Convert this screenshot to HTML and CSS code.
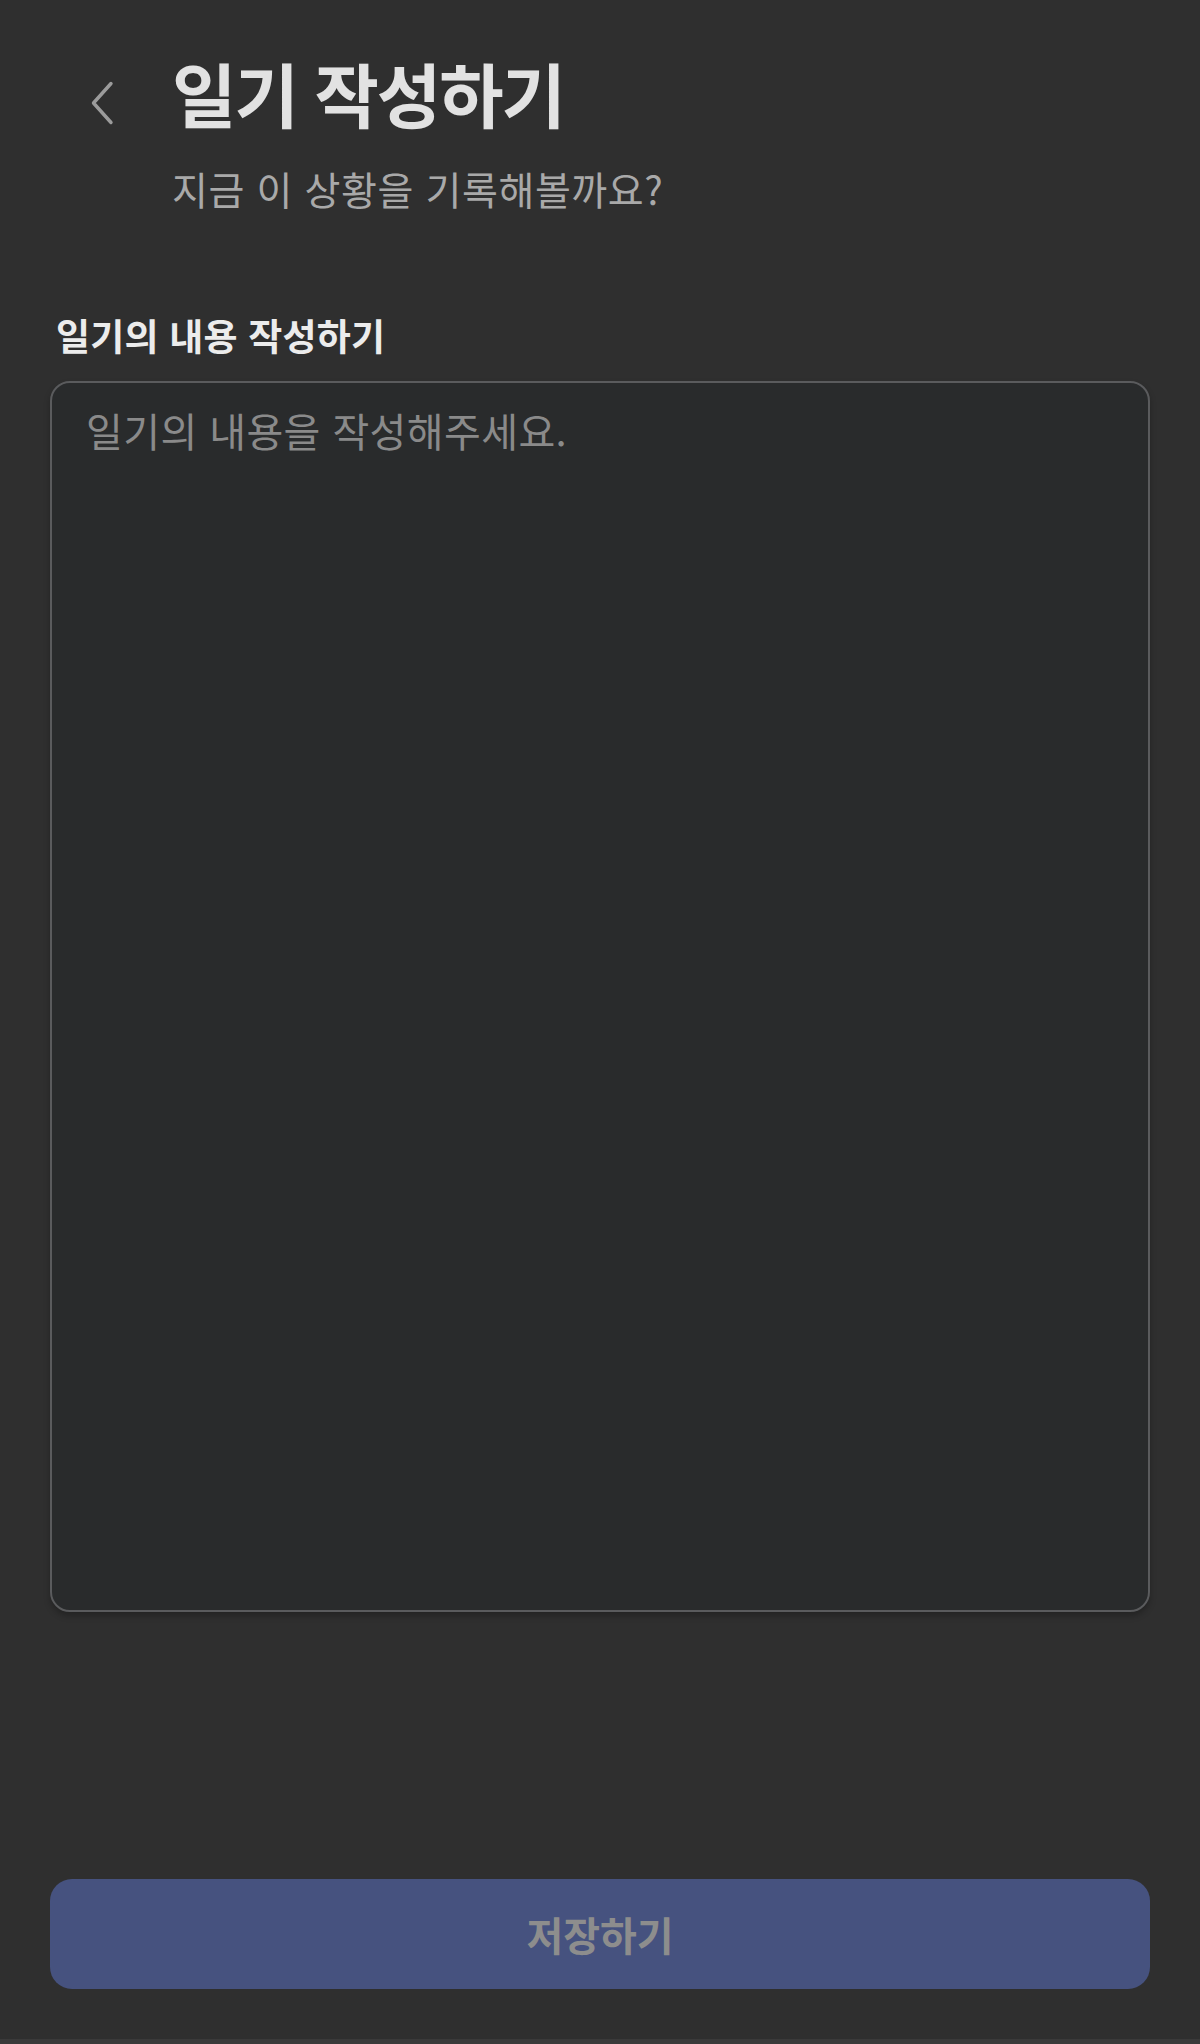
FILE: index.html
```html
<!DOCTYPE html>
<html lang="ko">
<head>
<meta charset="utf-8">
<title>일기 작성하기</title>
<link rel="stylesheet" href="styles.css">
</head>
<body>
<div class="page">
  <header class="header">
    <div class="title-row">
      <button class="back" aria-label="뒤로">
        <svg width="24" height="44" viewBox="0 0 24 44" fill="none">
          <path d="M21 2.5 L3.5 22 L21 41.5" stroke="#9b9b9b" stroke-width="3.4" stroke-linecap="round" stroke-linejoin="round"/>
        </svg>
      </button>
      <h1 class="title">일기 작성하기</h1>
    </div>
    <p class="subtitle">지금 이 상황을 기록해볼까요?</p>
  </header>
  <main class="content">
    <label class="label" for="diary">일기의 내용 작성하기</label>
    <textarea id="diary" class="editor" placeholder="일기의 내용을 작성해주세요."></textarea>
  </main>
  <div class="actions">
    <button class="save">저장하기</button>
  </div>
  <div class="bottom-bar"></div>
</div>
</body>
</html>
```

FILE: styles.css
```css
* { box-sizing: border-box; }
html, body {
  margin: 0;
  padding: 0;
  background: #2f2f2f;
}
body {
  font-family: "Noto Sans CJK KR", "Noto Sans", sans-serif;
  color: #e4e4e4;
}
.page {
  height: 2044px;
  display: flex;
  flex-direction: column;
}
.header {
  padding: 43px 0 0 0;
}
.title-row {
  display: flex;
  align-items: center;
  padding-left: 90px;
  gap: 58px;
}
.back {
  background: none;
  border: 0;
  padding: 0;
  width: 24px;
  height: 44px;
  display: flex;
  margin-top: 20px;
}
.title {
  margin: 0;
  font-size: 70px;
  line-height: 100px;
  font-weight: 700;
  letter-spacing: -2px;
  color: #e2e2e2;
}
.subtitle {
  margin: 20px 0 0 172px;
  font-size: 39px;
  line-height: 50px;
  font-weight: 400;
  letter-spacing: 0.6px;
  color: #a9a9a9;
}
.content {
  padding: 0 50px;
  display: flex;
  flex-direction: column;
  margin-top: 97px;
}
.label {
  padding-left: 6px;
  font-size: 37px;
  line-height: 50px;
  font-weight: 700;
  letter-spacing: 0.2px;
  color: #ececec;
}
.editor {
  margin-top: 21px;
  height: 1231px;
  width: 100%;
  resize: none;
  background: #292b2c;
  border: 2px solid #5a5b5d;
  border-radius: 20px;
  box-shadow: 0 4px 6px rgba(0,0,0,0.25);
  padding: 20px 34px;
  font-family: "Noto Sans CJK KR", "Noto Sans", sans-serif;
  font-size: 40px;
  line-height: 54px;
  letter-spacing: 0.4px;
  color: #cfcfcf;
  outline: none;
}
.editor::placeholder {
  color: #8a8a8a;
}
.actions {
  margin-top: auto;
  padding: 0 50px;
}
.save {
  width: 100%;
  height: 110px;
  border: 0;
  border-radius: 22px;
  background: #46527f;
  font-family: "Noto Sans CJK KR", "Noto Sans", sans-serif;
  font-size: 40px;
  font-weight: 700;
  letter-spacing: 0;
  color: #8d8d8d;
  padding: 0;
}
.bottom-bar {
  margin-top: 50px;
  height: 5px;
  background: #3a3a3a;
}
```
